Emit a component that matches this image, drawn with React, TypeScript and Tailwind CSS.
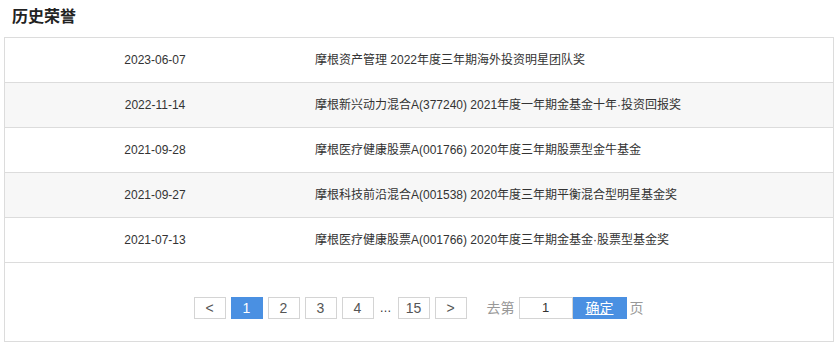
import React from "react";

const rows = [
  ["2023-06-07", "摩根资产管理 2022年度三年期海外投资明星团队奖"],
  ["2022-11-14", "摩根新兴动力混合A(377240) 2021年度一年期金基金十年·投资回报奖"],
  ["2021-09-28", "摩根医疗健康股票A(001766) 2020年度三年期股票型金牛基金"],
  ["2021-09-27", "摩根科技前沿混合A(001538) 2020年度三年期平衡混合型明星基金奖"],
  ["2021-07-13", "摩根医疗健康股票A(001766) 2020年度三年期金基金·股票型基金奖"],
];

const font = { fontFamily: '"Liberation Sans", Arial, "Noto Sans CJK SC", sans-serif' };

function PageBtn({ children, active }: { children: React.ReactNode; active?: boolean }) {
  return (
    <div
      className={
        "w-[32px] h-[22px] flex items-center justify-center text-[14px] border " +
        (active ? "bg-[#4a90e2] border-[#4a90e2] text-white" : "bg-white border-[#d4d4d4] text-[#555]")
      }
    >
      {children}
    </div>
  );
}

export default function App() {
  return (
    <div className="w-[837px] h-[346px] bg-white text-[#333]" style={font}>
      <div className="h-[37px] pl-[12px] pt-[6px] text-[16px] font-bold leading-[22px] text-[#222]">历史荣誉</div>
      <div className="ml-[4px] w-[830px] border border-[#dcdcdc]">
        {rows.map((r, i) => (
          <div
            key={i}
            className={
              "flex h-[45px] items-center text-[12px] border-b border-[#dcdcdc] " +
              (i % 2 === 1 ? "bg-[#f7f7f7]" : "bg-white")
            }
          >
            <div className="w-[300px] text-center">{r[0]}</div>
            <div className="pl-[10px]">{r[1]}</div>
          </div>
        ))}
        <div className="h-[78px] flex items-start justify-center pt-[34px]">
          <div className="flex items-center gap-[5px] ml-[-1px]">
            <PageBtn>&lt;</PageBtn>
            <PageBtn active>1</PageBtn>
            <PageBtn>2</PageBtn>
            <PageBtn>3</PageBtn>
            <PageBtn>4</PageBtn>
            <div className="w-[14px] text-center text-[12px] text-[#333]">…</div>
            <PageBtn>15</PageBtn>
            <PageBtn>&gt;</PageBtn>
            <div className="ml-[15px] text-[14px] text-[#999]">去第</div>
            <div className="flex items-center ml-[-1px]">
              <div className="w-[54px] h-[22px] border border-[#d4d4d4] flex items-center justify-center text-[13px] text-[#333]">1</div>
              <div className="w-[54px] h-[22px] bg-[#4a90e2] text-white text-[14px] flex items-center justify-center underline">确定</div>
            </div>
            <div className="ml-[-2px] text-[14px] text-[#999]">页</div>
          </div>
        </div>
      </div>
    </div>
  );
}
